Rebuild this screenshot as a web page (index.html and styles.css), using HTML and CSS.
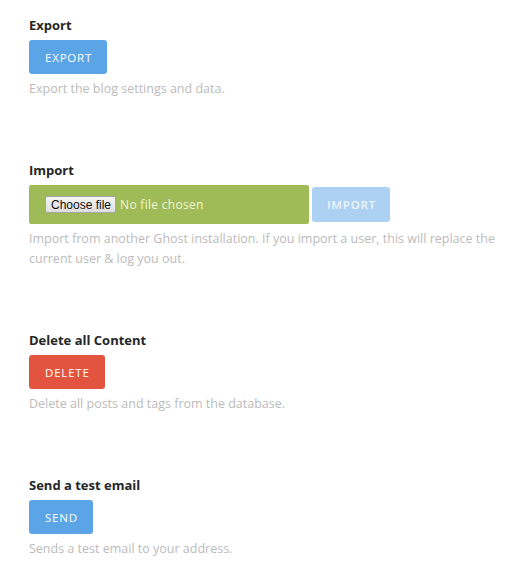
FILE: index.html
```html
<!DOCTYPE html>
<html>
<head>
<meta charset="utf-8">
<link rel="stylesheet" href="styles.css">
</head>
<body>
<div class="settings">
  <section class="group">
    <label class="title">Export</label>
    <button class="btn btn-blue">Export</button>
    <p class="help">Export the blog settings and data.</p>
  </section>
  <section class="group">
    <label class="title">Import</label>
    <div class="import-row">
      <div class="file-box">
        <span class="file-btn">Choose file</span>
        <span class="file-name">No file chosen</span>
      </div>
      <button class="btn btn-blue btn-disabled btn-import">Import</button>
    </div>
    <p class="help">Import from another Ghost installation. If you import a user, this will replace the current user &amp; log you out.</p>
  </section>
  <section class="group">
    <label class="title">Delete all Content</label>
    <button class="btn btn-red">Delete</button>
    <p class="help">Delete all posts and tags from the database.</p>
  </section>
  <section class="group">
    <label class="title">Send a test email</label>
    <button class="btn btn-blue">Send</button>
    <p class="help">Sends a test email to your address.</p>
  </section>
</div>
</body>
</html>
```
FILE: styles.css
```css
* { box-sizing: border-box; }
html, body { margin: 0; padding: 0; background: #fff; }
body { font-family: "Open Sans", sans-serif; }

.settings {
  padding: 16px 10px 0 29px;
  width: 516px;
}

.group { display: flex; flex-direction: column; align-items: flex-start; }
.group + .group { margin-top: 62px; }

.title {
  display: block;
  font-size: 13px;
  font-weight: 700;
  line-height: 18px;
  color: #242628;
  margin-bottom: 6px;
}

.btn {
  display: inline-flex;
  align-items: center;
  justify-content: center;
  height: 34px;
  padding: 0 15px 0 16px;
  border: 0;
  border-radius: 3px;
  font-family: "Open Sans", sans-serif;
  font-size: 11.5px;
  letter-spacing: 0.8px;
  text-transform: uppercase;
  color: #fff;
  cursor: pointer;
}
.btn-blue { background: #5ba4e5; }
.btn-red { background: #e25440; }
.btn-disabled { background: #add1f2; }
.btn-import { height: 35px; width: 78px; font-weight: 600; color: #eef5fc; }

.help {
  margin: 5px 0 0;
  font-size: 12.5px;
  line-height: 20px;
  color: #bbbbbb;
}

.import-row { display: flex; align-items: center; gap: 3px; }

.file-box {
  display: flex;
  align-items: center;
  width: 280px;
  height: 39px;
  padding-left: 16px;
  background: #9fbb58;
  border-radius: 2px;
}
.file-btn {
  display: inline-flex;
  align-items: center;
  height: 17px;
  padding: 0 4px 0 5px;
  border: 1px solid #a6a6a6;
  border-radius: 2px;
  background: linear-gradient(#f6f6f6, #dedede);
  font-family: "Liberation Sans", Arial, sans-serif;
  font-size: 12px;
  color: #111;
}
.file-name {
  margin-left: 4px;
  font-size: 12px;
  letter-spacing: 0.3px;
  color: #f2f5d8;
}
```
